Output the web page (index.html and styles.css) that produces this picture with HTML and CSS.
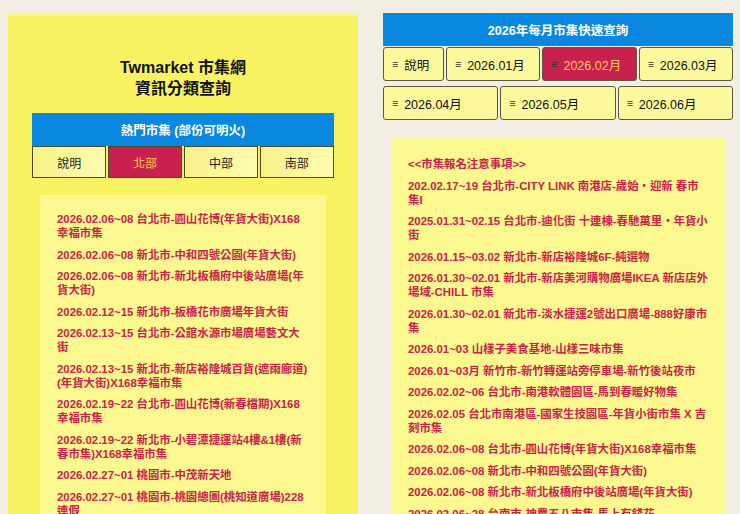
FILE: index.html
```html
<!DOCTYPE html>
<html lang="zh-Hant">
<head>
<meta charset="utf-8">
<title>Twmarket 市集網</title>
<link rel="stylesheet" href="styles.css">
</head>
<body>
<div class="page">
  <section class="left">
    <h1 class="title">Twmarket 市集網<br>資訊分類查詢</h1>
    <div class="bar">熱門市集 (部份可明火)</div>
    <div class="tabs">
      <a class="tab">說明</a>
      <a class="tab active">北部</a>
      <a class="tab">中部</a>
      <a class="tab">南部</a>
    </div>
    <div class="list">
      <p>2026.02.06~08 台北市-圓山花博(年貨大街)X168幸福市集</p>
      <p>2026.02.06~08 新北市-中和四號公園(年貨大街)</p>
      <p>2026.02.06~08 新北市-新北板橋府中後站廣場(年貨大街)</p>
      <p>2026.02.12~15 新北市-板橋花市廣場年貨大街</p>
      <p>2026.02.13~15 台北市-公館水源市場廣場藝文大街</p>
      <p>2026.02.13~15 新北市-新店裕隆城百貨(遮雨廊道)(年貨大街)X168幸福市集</p>
      <p>2026.02.19~22 台北市-圓山花博(新春檔期)X168幸福市集</p>
      <p>2026.02.19~22 新北市-小碧潭捷運站4樓&amp;1樓(新春市集)X168幸福市集</p>
      <p>2026.02.27~01 桃園市-中茂新天地</p>
      <p>2026.02.27~01 桃園市-桃園總圖(桃知道廣場)228連假</p>
    </div>
  </section>
  <section class="right">
    <div class="bar top">2026年每月市集快速查詢</div>
    <div class="months row1">
      <a class="mbtn"><span class="ico">≡</span>說明</a>
      <a class="mbtn"><span class="ico">≡</span>2026.01月</a>
      <a class="mbtn active"><span class="ico">≡</span>2026.02月</a>
      <a class="mbtn"><span class="ico">≡</span>2026.03月</a>
    </div>
    <div class="months row2">
      <a class="mbtn"><span class="ico">≡</span>2026.04月</a>
      <a class="mbtn"><span class="ico">≡</span>2026.05月</a>
      <a class="mbtn"><span class="ico">≡</span>2026.06月</a>
    </div>
    <div class="list rlist">
      <p>&lt;&lt;市集報名注意事項&gt;&gt;</p>
      <p>202.02.17~19 台北市-CITY LINK 南港店-歲始・迎新 春市集I</p>
      <p>2025.01.31~02.15 台北市-迪化街 十連棟-春馳萬里・年貨小街</p>
      <p>2026.01.15~03.02 新北市-新店裕隆城6F-純選物</p>
      <p>2026.01.30~02.01 新北市-新店美河購物廣場IKEA 新店店外場域-CHILL 市集</p>
      <p>2026.01.30~02.01 新北市-淡水捷運2號出口廣場-888好康市集</p>
      <p>2026.01~03 山樣子美食基地-山樣三味市集</p>
      <p>2026.01~03月 新竹市-新竹轉運站旁停車場-新竹後站夜市</p>
      <p>2026.02.02~06 台北市-南港軟體園區-馬到春暖好物集</p>
      <p>2026.02.05 台北市南港區-國家生技園區-年貨小街市集 X 吉刻市集</p>
      <p>2026.02.06~08 台北市-圓山花博(年貨大街)X168幸福市集</p>
      <p>2026.02.06~08 新北市-中和四號公園(年貨大街)</p>
      <p>2026.02.06~08 新北市-新北板橋府中後站廣場(年貨大街)</p>
      <p>2026.02.06~28 台南市-神農五八市集-馬上有錢花</p>
    </div>
  </section>
</div>
</body>
</html>
```

FILE: styles.css
```css
html, body {
  margin: 0;
  padding: 0;
  overflow: hidden;
  height: 100%;
}
body {
  background: #f3eee3;
  font-family: "Liberation Sans", Arial, "Noto Sans CJK TC", sans-serif;
  color: #111;
}
.page {
  display: flex;
  gap: 25px;
  padding: 13px 7px 0 8px;
  height: 100%;
  box-sizing: border-box;
  align-items: stretch;
}
.left {
  width: 350px;
  flex: none;
  background: #f8f262;
  border-top: 3px solid #f9f47e;
  padding: 0 24px;
  box-sizing: border-box;
  display: flex;
  flex-direction: column;
}
.right {
  width: 350px;
  flex: none;
  display: flex;
  flex-direction: column;
}
.left > *, .right > * {
  flex-shrink: 0;
}
.title {
  margin: 41px 0 14px;
  text-align: center;
  font-size: 16px;
  line-height: 21px;
  font-weight: bold;
  color: #111;
}
.bar {
  background: #0a88e0;
  color: #fff;
  font-weight: bold;
  font-size: 12.5px;
  height: 33px;
  display: flex;
  align-items: center;
  justify-content: center;
}
.tabs {
  display: grid;
  grid-template-columns: repeat(4, 1fr);
  gap: 1.5px;
}
.tab {
  height: 32px;
  box-sizing: border-box;
  border: 1px solid #4a4a2a;
  background: linear-gradient(90deg, #f8f288, #fdfbaf);
  display: flex;
  align-items: center;
  justify-content: center;
  font-size: 12px;
  color: #222;
}
.tab.active, .mbtn.active {
  background: #c8214f;
  color: #ffc94c;
}
.list {
  background: #fbf890;
  margin: 17px 8px 0;
  padding: 17px 17px 0;
  flex: 1 0 auto;
  color: #c8234a;
  font-weight: bold;
  font-size: 11.4px;
  line-height: 14px;
}
.list p {
  margin: 0 0 7.5px;
}
.months {
  display: grid;
  gap: 2px;
}
.row1 {
  grid-template-columns: 61px 1fr 1fr 1fr;
  margin-top: 1px;
}
.row2 {
  grid-template-columns: 1fr 1fr 1fr;
  margin-top: 5px;
}
.mbtn {
  height: 34px;
  box-sizing: border-box;
  border: 1px solid #5a5840;
  border-radius: 3px;
  background: #fcf99c;
  display: flex;
  align-items: center;
  padding-left: 8px;
  font-size: 12.5px;
  color: #111;
}
.ico {
  font-size: 10.5px;
  margin-right: 6px;
  color: #333;
}
.rlist {
  margin: 18px 8px 0;
  padding: 19px 17px 0;
}
```
